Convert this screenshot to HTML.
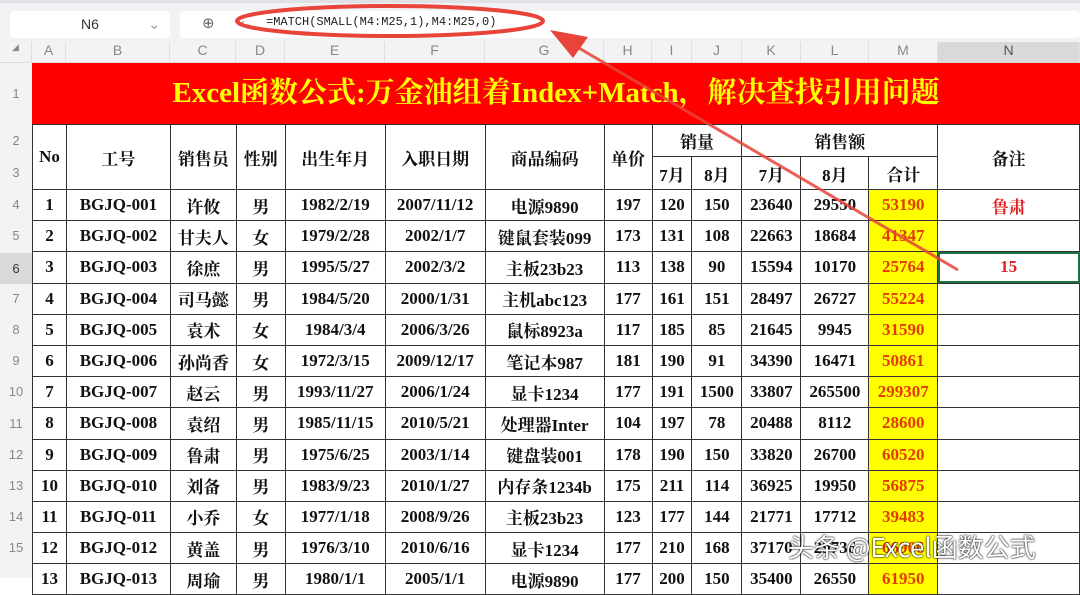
<!DOCTYPE html>
<html><head><meta charset="utf-8"><style>
*{margin:0;padding:0;box-sizing:border-box}
body{width:1080px;height:578px;overflow:hidden;background:#fff;position:relative;font-family:"Liberation Serif","Noto Serif CJK SC",serif}
.top{position:absolute;left:0;top:0;width:1080px;height:42px;background:#f1f2f4;border-top:3px solid #dfe1e4}
.nb{position:absolute;left:10px;top:8px;width:160px;height:27px;background:#fff;border-radius:4px;font:14px "Liberation Sans",sans-serif;color:#333;text-align:center;line-height:27px}
.fb{position:absolute;left:180px;top:8px;width:900px;height:27px;background:#fff;border-radius:4px}
.ftxt{position:absolute;left:266px;top:12px;font:12px "Liberation Mono",monospace;color:#222}
.colh{position:absolute;top:42px;left:0;width:1080px;height:21px;background:#f3f3f3;border-bottom:1px solid #ddd}
.colh div{position:absolute;top:0;height:21px;line-height:21px;text-align:center;font:14px "Liberation Sans",sans-serif;color:#888;border-right:1px solid #e0e0e0}
.rown{position:absolute;left:0;top:63px;width:32px;height:515px;background:#f3f3f3}
.rown div{position:absolute;left:0;width:32px;text-align:center;font:13px "Liberation Sans",sans-serif;color:#888}
.title{position:absolute;left:32px;top:63px;width:1048px;height:61px;background:#f00;color:#ff0;font-weight:bold;font-size:29px;text-align:center;line-height:61px}
table{position:absolute;left:32px;top:124px;border-collapse:collapse;table-layout:fixed}
td{border:1px solid #333;text-align:center;font-weight:bold;font-size:17px;color:#111;white-space:nowrap;overflow:hidden;padding:0}
td.m{background:#ff0;color:#e43b00}
td.r{color:#e0201f}
.wm{position:absolute;left:788px;top:528px;font:26px "Noto Sans CJK SC",sans-serif;color:#fff;text-shadow:0 0 2px #000,0 0 1px #000}
</style></head><body>
<div class="top"><div class="nb">N6<span style="position:absolute;right:10px;color:#999">⌄</span></div><div class="fb"><span style="position:absolute;left:22px;top:3px;font:15px 'DejaVu Sans';color:#666">⊕</span><span style="position:absolute;left:56px;top:2px;color:#888;font:13px 'DejaVu Sans'">⌄</span></div>
<div class="ftxt">=MATCH(SMALL(M4:M25,1),M4:M25,0)</div></div>
<div class="colh">
<div style="left:0;width:32px;font-size:9px">◢</div>
<div style="left:32px;width:34px">A</div><div style="left:66px;width:104px">B</div><div style="left:170px;width:66px">C</div><div style="left:236px;width:49px">D</div><div style="left:285px;width:100px">E</div><div style="left:385px;width:100px">F</div><div style="left:485px;width:119px">G</div><div style="left:604px;width:48px">H</div><div style="left:652px;width:40px">I</div><div style="left:692px;width:50px">J</div><div style="left:742px;width:59px">K</div><div style="left:801px;width:68px">L</div><div style="left:869px;width:69px">M</div><div style="left:938px;width:142px;background:#d9d9d9;color:#555">N</div>
</div>
<div class="rown">
<div style="top:23px">1</div><div style="top:70px">2</div><div style="top:102px">3</div>
<div style="top:134px">4</div><div style="top:165px">5</div><div style="top:190px;height:31px;line-height:31px;background:#d9d9d9;color:#333">6</div><div style="top:228px">7</div><div style="top:259px">8</div><div style="top:290px">9</div><div style="top:321px">10</div><div style="top:353px">11</div><div style="top:384px">12</div><div style="top:415px">13</div><div style="top:446px">14</div><div style="top:477px">15</div>
</div>
<div class="title">Excel函数公式:万金油组着Index+Match，解决查找引用问题</div>
<table>
<colgroup><col style="width:34px"><col style="width:104px"><col style="width:66px"><col style="width:49px"><col style="width:100px"><col style="width:100px"><col style="width:119px"><col style="width:48px"><col style="width:40px"><col style="width:50px"><col style="width:59px"><col style="width:68px"><col style="width:69px"><col style="width:142px"></colgroup>
<tr style="height:32px"><td rowspan="2">No</td><td rowspan="2">工号</td><td rowspan="2">销售员</td><td rowspan="2">性别</td><td rowspan="2">出生年月</td><td rowspan="2">入职日期</td><td rowspan="2">商品编码</td><td rowspan="2">单价</td><td colspan="2">销量</td><td colspan="3">销售额</td><td rowspan="2">备注</td></tr>
<tr style="height:33px"><td>7月</td><td>8月</td><td>7月</td><td>8月</td><td>合计</td></tr>
<tr style="height:31.2px"><td>1</td><td>BGJQ-001</td><td>许攸</td><td>男</td><td>1982/2/19</td><td>2007/11/12</td><td>电源9890</td><td>197</td><td>120</td><td>150</td><td>23640</td><td>29550</td><td class="m">53190</td><td class="r">鲁肃</td></tr>
<tr style="height:31.2px"><td>2</td><td>BGJQ-002</td><td>甘夫人</td><td>女</td><td>1979/2/28</td><td>2002/1/7</td><td>键鼠套装099</td><td>173</td><td>131</td><td>108</td><td>22663</td><td>18684</td><td class="m">41347</td><td></td></tr>
<tr style="height:31.2px"><td>3</td><td>BGJQ-003</td><td>徐庶</td><td>男</td><td>1995/5/27</td><td>2002/3/2</td><td>主板23b23</td><td>113</td><td>138</td><td>90</td><td>15594</td><td>10170</td><td class="m">25764</td><td class="r" style="outline:2px solid #1e7145;outline-offset:-2px">15</td></tr>
<tr style="height:31.2px"><td>4</td><td>BGJQ-004</td><td>司马懿</td><td>男</td><td>1984/5/20</td><td>2000/1/31</td><td>主机abc123</td><td>177</td><td>161</td><td>151</td><td>28497</td><td>26727</td><td class="m">55224</td><td></td></tr>
<tr style="height:31.2px"><td>5</td><td>BGJQ-005</td><td>袁术</td><td>女</td><td>1984/3/4</td><td>2006/3/26</td><td>鼠标8923a</td><td>117</td><td>185</td><td>85</td><td>21645</td><td>9945</td><td class="m">31590</td><td></td></tr>
<tr style="height:31.2px"><td>6</td><td>BGJQ-006</td><td>孙尚香</td><td>女</td><td>1972/3/15</td><td>2009/12/17</td><td>笔记本987</td><td>181</td><td>190</td><td>91</td><td>34390</td><td>16471</td><td class="m">50861</td><td></td></tr>
<tr style="height:31.2px"><td>7</td><td>BGJQ-007</td><td>赵云</td><td>男</td><td>1993/11/27</td><td>2006/1/24</td><td>显卡1234</td><td>177</td><td>191</td><td>1500</td><td>33807</td><td>265500</td><td class="m">299307</td><td></td></tr>
<tr style="height:31.2px"><td>8</td><td>BGJQ-008</td><td>袁绍</td><td>男</td><td>1985/11/15</td><td>2010/5/21</td><td>处理器Inter</td><td>104</td><td>197</td><td>78</td><td>20488</td><td>8112</td><td class="m">28600</td><td></td></tr>
<tr style="height:31.2px"><td>9</td><td>BGJQ-009</td><td>鲁肃</td><td>男</td><td>1975/6/25</td><td>2003/1/14</td><td>键盘装001</td><td>178</td><td>190</td><td>150</td><td>33820</td><td>26700</td><td class="m">60520</td><td></td></tr>
<tr style="height:31.2px"><td>10</td><td>BGJQ-010</td><td>刘备</td><td>男</td><td>1983/9/23</td><td>2010/1/27</td><td>内存条1234b</td><td>175</td><td>211</td><td>114</td><td>36925</td><td>19950</td><td class="m">56875</td><td></td></tr>
<tr style="height:31.2px"><td>11</td><td>BGJQ-011</td><td>小乔</td><td>女</td><td>1977/1/18</td><td>2008/9/26</td><td>主板23b23</td><td>123</td><td>177</td><td>144</td><td>21771</td><td>17712</td><td class="m">39483</td><td></td></tr>
<tr style="height:31.2px"><td>12</td><td>BGJQ-012</td><td>黄盖</td><td>男</td><td>1976/3/10</td><td>2010/6/16</td><td>显卡1234</td><td>177</td><td>210</td><td>168</td><td>37170</td><td>29736</td><td class="m">66906</td><td></td></tr>
<tr style="height:31.2px"><td>13</td><td>BGJQ-013</td><td>周瑜</td><td>男</td><td>1980/1/1</td><td>2005/1/1</td><td>电源9890</td><td>177</td><td>200</td><td>150</td><td>35400</td><td>26550</td><td class="m">61950</td><td></td></tr>
</table>
<svg style="position:absolute;left:0;top:0" width="1080" height="578">
<ellipse cx="390" cy="21" rx="153" ry="15" fill="none" stroke="#e8443a" stroke-width="4"/>
<line x1="958" y1="270" x2="572" y2="44" stroke="#e8443a" stroke-width="3" opacity="0.85"/>
<polygon points="550,30 588,37 573,58" fill="#e8443a"/>
</svg>
<div class="wm">头条 @Excel函数公式</div>
</body></html>
